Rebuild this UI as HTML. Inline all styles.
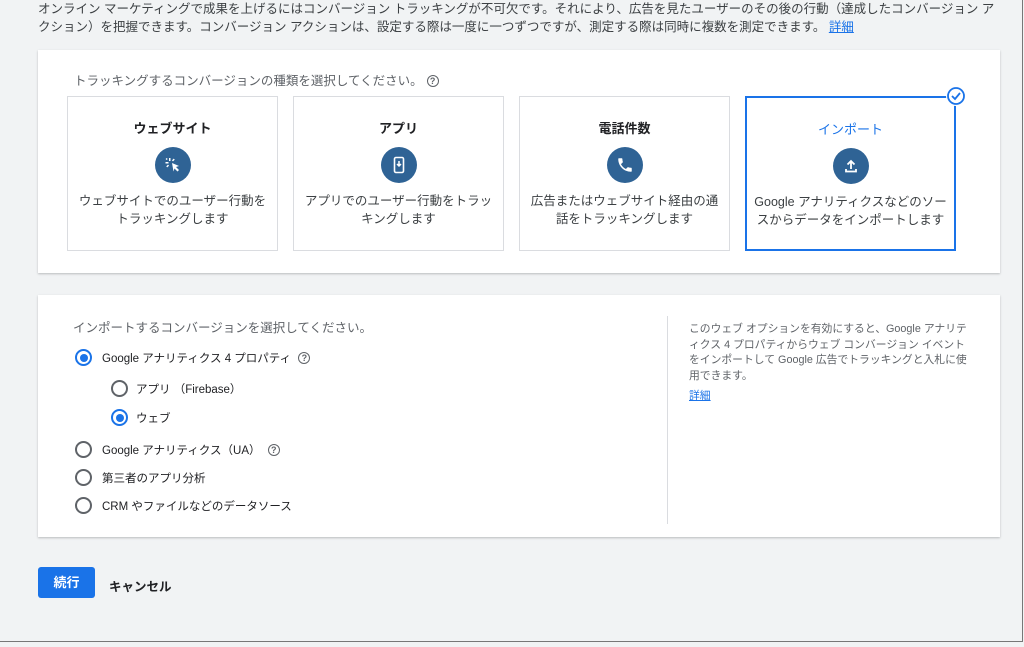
<!DOCTYPE html>
<html><head><meta charset="utf-8"><style>
*{box-sizing:border-box;margin:0;padding:0}
body{width:1024px;height:647px;background:#f1f3f4;font-family:"Liberation Sans","Noto Sans CJK JP",sans-serif;color:#3c4043;position:relative;overflow:hidden}
.frame{position:absolute;left:0;top:0;width:1023px;height:642px;border-right:1px solid #777;border-bottom:1px solid #777}
.intro{position:absolute;left:38px;top:0;width:966px;font-size:12.5px;line-height:18px;color:#3c4043}
.intro a{color:#1a73e8;text-decoration:underline}
.card{position:absolute;background:#fff;box-shadow:0 1px 2px rgba(60,64,67,.3)}
.c1{left:38px;top:50px;width:962px;height:223px}
.c2{left:38px;top:295px;width:962px;height:242px}
.q{display:inline-block;width:12px;height:12px;border:1.3px solid #5f6368;border-radius:50%;font-size:9px;line-height:10px;text-align:center;color:#5f6368;vertical-align:1px;margin-left:4px;font-weight:bold}
.opt{position:absolute;top:46px;width:211px;height:155px;border:1.5px solid #dadce0;text-align:center}
.opt.sel{border:2px solid #1a73e8}
.opt h3{font-size:13px;font-weight:bold;color:#202124;margin-top:21px}
.opt.sel h3{color:#1a73e8;font-weight:normal}
.ic{width:36px;height:36px;border-radius:50%;background:#2f6395;margin:10px auto 0;display:flex;align-items:center;justify-content:center}
.opt p{font-size:12.5px;line-height:18px;margin-top:9px;color:#3c4043}
.radio{position:absolute;width:17px;height:17px;border:2px solid #5f6368;border-radius:50%}
.radio.on{border-color:#1a73e8}
.radio.on::after{content:"";position:absolute;left:2.5px;top:2.5px;width:8px;height:8px;border-radius:50%;background:#1a73e8}
.lbl{position:absolute;font-size:11.5px;color:#202124}
.btn{position:absolute;left:38px;top:567px;width:57px;height:31px;background:#1a73e8;border-radius:3px;color:#fff;font-size:13px;font-weight:bold;text-align:center;line-height:31px}
</style></head><body>
<div class="frame"></div>
<div class="intro">オンライン マーケティングで成果を上げるにはコンバージョン トラッキングが不可欠です。それにより、広告を見たユーザーのその後の行動（達成したコンバージョン アクション）を把握できます。コンバージョン アクションは、設定する際は一度に一つずつですが、測定する際は同時に複数を測定できます。 <a>詳細</a></div>

<div class="card c1">
 <div style="position:absolute;left:36px;top:20px;font-size:12.5px;color:#5f6368">トラッキングするコンバージョンの種類を選択してください。<span class="q">?</span></div>
 <div class="opt" style="left:29px">
  <h3>ウェブサイト</h3>
  <div class="ic"><svg width="18" height="18" viewBox="0 0 18 18" fill="#fff"><path d="M8 7l7 3-3 1 3 3-1.5 1.5-3-3-1 3z"/><rect x="5" y="2" width="1.5" height="3"/><rect x="1.5" y="6" width="3" height="1.5"/><rect x="2" y="2.5" width="1.5" height="1.5" transform="rotate(45 3 3)"/><rect x="8.5" y="2.5" width="1.5" height="2.5" transform="rotate(45 9 4)"/><rect x="2.5" y="9" width="2.5" height="1.5" transform="rotate(-45 4 10)"/></svg></div>
  <p>ウェブサイトでのユーザー行動を<br>トラッキングします</p>
 </div>
 <div class="opt" style="left:255px">
  <h3>アプリ</h3>
  <div class="ic"><svg width="18" height="18" viewBox="0 0 18 18"><rect x="4.5" y="1.5" width="9" height="15" rx="1.5" fill="none" stroke="#fff" stroke-width="1.6"/><path d="M9 5v5M7 8l2 2 2-2" stroke="#fff" stroke-width="1.5" fill="none"/></svg></div>
  <p>アプリでのユーザー行動をトラッ<br>キングします</p>
 </div>
 <div class="opt" style="left:481px">
  <h3>電話件数</h3>
  <div class="ic"><svg width="18" height="18" viewBox="0 0 24 24" fill="#fff"><path d="M6.6 10.8c1.4 2.8 3.8 5.1 6.6 6.6l2.2-2.2c.3-.3.7-.4 1-.2 1.1.4 2.3.6 3.6.6.6 0 1 .4 1 1V20c0 .6-.4 1-1 1C10.6 21 3 13.4 3 4c0-.6.4-1 1-1h3.5c.6 0 1 .4 1 1 0 1.3.2 2.5.6 3.6.1.3 0 .7-.2 1z"/></svg></div>
  <p>広告またはウェブサイト経由の通<br>話をトラッキングします</p>
 </div>
 <div class="opt sel" style="left:707px">
  <h3>インポート</h3>
  <div class="ic"><svg width="18" height="18" viewBox="0 0 18 18" fill="none" stroke="#fff" stroke-width="1.8"><path d="M9 12V4M5.5 7.5L9 4l3.5 3.5M4 12v2.5h10V12"/></svg></div>
  <p>Google アナリティクスなどのソー<br>スからデータをインポートします</p>
  <svg style="position:absolute;right:-12px;top:-12px;background:#fff;border-radius:50%" width="20" height="20" viewBox="0 0 20 20"><circle cx="10" cy="10" r="8" fill="#fff" stroke="#1a73e8" stroke-width="1.8"/><path d="M6 10l3 3 5-6" stroke="#1a73e8" stroke-width="1.8" fill="none"/></svg>
 </div>
</div>

<div class="card c2">
 <div style="position:absolute;left:35px;top:22px;font-size:12.5px;color:#5f6368">インポートするコンバージョンを選択してください。</div>
 <div class="radio on" style="left:37px;top:54px"></div><div class="lbl" style="left:64px;top:55px">Google アナリティクス 4 プロパティ <span class="q">?</span></div>
 <div class="radio" style="left:73px;top:85px"></div><div class="lbl" style="left:98px;top:86px">アプリ （Firebase）</div>
 <div class="radio on" style="left:73px;top:114px"></div><div class="lbl" style="left:98px;top:115px">ウェブ</div>
 <div class="radio" style="left:37px;top:146px"></div><div class="lbl" style="left:64px;top:147px">Google アナリティクス（UA） <span class="q">?</span></div>
 <div class="radio" style="left:37px;top:174px"></div><div class="lbl" style="left:64px;top:175px">第三者のアプリ分析</div>
 <div class="radio" style="left:37px;top:202px"></div><div class="lbl" style="left:64px;top:203px">CRM やファイルなどのデータソース</div>
 <div style="position:absolute;left:629px;top:21px;width:1px;height:208px;background:#dadce0"></div>
 <div style="position:absolute;left:651px;top:27px;width:282px;font-size:10.8px;line-height:15.5px;color:#5f6368">このウェブ オプションを有効にすると、Google アナリティクス 4 プロパティからウェブ コンバージョン イベントをインポートして Google 広告でトラッキングと入札に使用できます。</div>
 <div style="position:absolute;left:651px;top:92px;font-size:10.8px;color:#1a73e8;text-decoration:underline">詳細</div>
</div>

<div class="btn">続行</div>
<div style="position:absolute;left:109px;top:576px;font-size:12.5px;font-weight:bold;color:#202124">キャンセル</div>
</body></html>
